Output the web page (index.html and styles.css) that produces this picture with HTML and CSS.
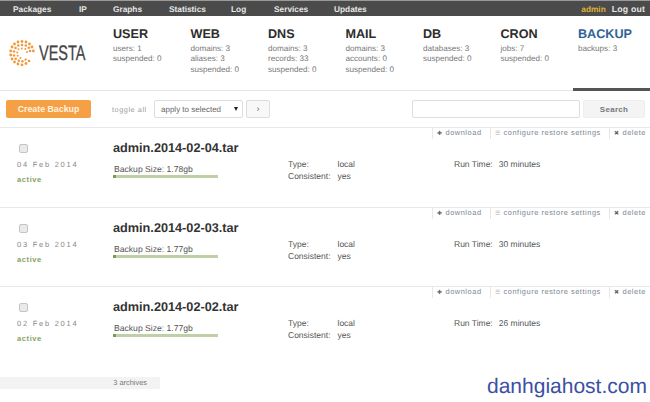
FILE: index.html
```html
<!DOCTYPE html>
<html lang="en">
<head>
<meta charset="utf-8">
<title>Vesta - Backup</title>
<link rel="stylesheet" href="styles.css">
</head>
<body>
<nav class="topbar">
  <div class="menu">
    <a>Packages</a><a>IP</a><a>Graphs</a><a>Statistics</a><a>Log</a><a>Services</a><a>Updates</a>
  </div>
  <div class="session"><span class="user">admin</span><a>Log out</a></div>
</nav>
<header class="stats">
  <div class="logo">
    <svg class="logo-mark" width="26" height="26" viewBox="0 0 26 26">
      <g fill="#f09a3e">
        <circle cx="13" cy="1.5" r="1.4"/><circle cx="9" cy="2" r="1.4"/><circle cx="17" cy="2" r="1.4"/><circle cx="5.5" cy="4" r="1.4"/><circle cx="20.5" cy="4" r="1.4"/><circle cx="3" cy="7" r="1.4"/><circle cx="23" cy="7" r="1.4"/><circle cx="1.7" cy="11" r="1.4"/><circle cx="24.3" cy="11" r="1.4"/><circle cx="1.7" cy="15" r="1.4"/><circle cx="3" cy="19" r="1.4"/><circle cx="5.5" cy="22" r="1.4"/><circle cx="9" cy="24" r="1.4"/><circle cx="13" cy="24.8" r="1.4"/><circle cx="17" cy="23.5" r="1.4"/><circle cx="20" cy="21" r="1.3"/>
        <circle cx="13" cy="5" r="1.3"/><circle cx="9.3" cy="5.5" r="1.3"/><circle cx="16.8" cy="5.5" r="1.3"/><circle cx="6.5" cy="8" r="1.3"/><circle cx="19.8" cy="7.7" r="1.3"/><circle cx="5" cy="11.5" r="1.3"/><circle cx="21" cy="11" r="1.3"/><circle cx="5" cy="15.5" r="1.3"/><circle cx="6.7" cy="18.8" r="1.3"/><circle cx="9.8" cy="20.8" r="1.3"/><circle cx="13.4" cy="21.2" r="1.3"/><circle cx="16.6" cy="19.6" r="1.2"/>
        <circle cx="12.8" cy="8.4" r="1"/><circle cx="9.5" cy="9.2" r="1"/><circle cx="16.3" cy="9" r="1"/><circle cx="8.2" cy="12.5" r="1"/><circle cx="18" cy="12" r="1"/><circle cx="8.6" cy="15.8" r="1"/><circle cx="11.5" cy="18" r="1"/>
      </g>
    </svg>
    <span class="logo-text">VESTA</span>
  </div>
  <div class="stat"><h2>USER</h2><p>users: 1</p><p>suspended: 0</p></div>
  <div class="stat"><h2>WEB</h2><p>domains: 3</p><p>aliases: 3</p><p>suspended: 0</p></div>
  <div class="stat"><h2>DNS</h2><p>domains: 3</p><p>records: 33</p><p>suspended: 0</p></div>
  <div class="stat"><h2>MAIL</h2><p>domains: 3</p><p>accounts: 0</p><p>suspended: 0</p></div>
  <div class="stat"><h2>DB</h2><p>databases: 3</p><p>suspended: 0</p></div>
  <div class="stat"><h2>CRON</h2><p>jobs: 7</p><p>suspended: 0</p></div>
  <div class="stat active"><h2>BACKUP</h2><p>backups: 3</p></div>
</header>
<section class="toolbar">
  <button class="create" type="button">Create Backup</button>
  <span class="toggle">toggle all</span>
  <div class="select"><span>apply to selected</span><i class="caret"></i></div>
  <button class="go" type="button">›</button>
  <div class="searchbox"></div>
  <button class="search" type="button">Search</button>
</section>
<main>
  <article class="row">
    <div class="actions"><a class="a-dl"><b class="ic">✚</b>download</a><a class="a-cfg"><b class="ic lines">☰</b>configure restore settings</a><a class="a-del"><b class="ic">✖</b>delete</a></div>
    <div class="body">
      <div class="left"><span class="check"></span><div class="date">04 Feb 2014</div><div class="status">active</div></div>
      <div class="main-col"><h3>admin.2014-02-04.tar</h3><div class="size">Backup Size: 1.78gb</div><div class="bar"><span></span></div></div>
      <dl class="meta"><div><dt>Type:</dt><dd>local</dd></div><div class="second"><dt>Consistent:</dt><dd>yes</dd></div></dl>
      <div class="run"><span>Run Time:</span><span>30 minutes</span></div>
    </div>
  </article>
  <article class="row">
    <div class="actions"><a class="a-dl"><b class="ic">✚</b>download</a><a class="a-cfg"><b class="ic lines">☰</b>configure restore settings</a><a class="a-del"><b class="ic">✖</b>delete</a></div>
    <div class="body">
      <div class="left"><span class="check"></span><div class="date">03 Feb 2014</div><div class="status">active</div></div>
      <div class="main-col"><h3>admin.2014-02-03.tar</h3><div class="size">Backup Size: 1.77gb</div><div class="bar"><span></span></div></div>
      <dl class="meta"><div><dt>Type:</dt><dd>local</dd></div><div class="second"><dt>Consistent:</dt><dd>yes</dd></div></dl>
      <div class="run"><span>Run Time:</span><span>30 minutes</span></div>
    </div>
  </article>
  <article class="row">
    <div class="actions"><a class="a-dl"><b class="ic">✚</b>download</a><a class="a-cfg"><b class="ic lines">☰</b>configure restore settings</a><a class="a-del"><b class="ic">✖</b>delete</a></div>
    <div class="body">
      <div class="left"><span class="check"></span><div class="date">02 Feb 2014</div><div class="status">active</div></div>
      <div class="main-col"><h3>admin.2014-02-02.tar</h3><div class="size">Backup Size: 1.77gb</div><div class="bar"><span></span></div></div>
      <dl class="meta"><div><dt>Type:</dt><dd>local</dd></div><div class="second"><dt>Consistent:</dt><dd>yes</dd></div></dl>
      <div class="run"><span>Run Time:</span><span>26 minutes</span></div>
    </div>
  </article>
</main>
<footer class="count">3 archives</footer>
<div class="watermark">danhgiahost.com</div>
</body>
</html>
```
FILE: styles.css
```css
* { box-sizing: border-box; }
html, body { margin: 0; padding: 0; }
body {
  position: relative;
  width: 650px;
  height: 402px;
  overflow: hidden;
  background: #fff;
  color: #555;
  font-family: "Liberation Sans", Arial, sans-serif;
  font-size: 9px;
  text-rendering: geometricPrecision;
}
.topbar {
  height: 16px;
  background: #4b4b4b;
  border-top: 1px solid #9a9a9a;
  color: #e6e6e6;
  font-weight: bold;
  display: flex;
  justify-content: space-between;
  align-items: center;
  padding: 0 5px 0 13px;
  font-size: 8.3px;
}
.menu {
  display: grid;
  grid-template-columns: 66px 34px 56px 62px 43px 60px auto;
}
.session { display: flex; gap: 6px; }
.session a { font-size: 8.7px; letter-spacing: .2px; }
.user { color: #dfb232; }
.stats {
  height: 75px;
  display: flex;
  border-bottom: 1px solid #e6e6e6;
}
.logo {
  width: 113px;
  display: flex;
  align-items: flex-start;
  padding: 24px 0 0 8.5px;
}
.logo-mark { flex: none; }
.logo-text {
  margin: 2px 0 0 4px;
  color: #444;
  font-size: 21px;
  line-height: 23px;
  -webkit-text-stroke: .3px #444;
  transform: scaleX(.69);
  transform-origin: left center;
}
.stat { width: 77.5px; padding-top: 11px; position: relative; }
.stat h2 {
  margin: 0 0 2px;
  color: #2d2d2d;
  font-size: 12.6px;
  line-height: 15px;
  font-weight: bold;
}
.stat p {
  margin: 0;
  color: #777;
  font-size: 8.1px;
  line-height: 10.3px;
}
.stat.active { flex: 1; }
.stat.active h2 { color: #2f6496; }
.stat.active::after {
  content: "";
  position: absolute;
  left: -5px;
  right: 0;
  bottom: -1px;
  height: 3px;
  background: #555;
}
.toolbar {
  height: 36px;
  display: flex;
  align-items: flex-start;
  padding: 9px 5px 0 6px;
}
.toolbar button {
  font-family: inherit;
  padding: 0;
  height: 18px;
  border-radius: 2px;
}
.create {
  width: 85px;
  border: 0;
  background: #f5a045;
  color: #fff3e0;
  font-size: 8.8px;
  font-weight: bold;
}
.toggle {
  margin: 5px 0 0 21px;
  width: 42px;
  color: #999;
  font-size: 7.2px;
  letter-spacing: .6px;
}
.select {
  width: 89px;
  height: 18px;
  border: 1px solid #ddd;
  border-radius: 2px;
  display: flex;
  align-items: center;
  justify-content: space-between;
  padding: 0 4px 0 6px;
  color: #666;
  font-size: 8px;
}
.caret {
  width: 0;
  height: 0;
  border-left: 2.5px solid transparent;
  border-right: 2.5px solid transparent;
  border-top: 4px solid #222;
}
.go {
  width: 24px;
  margin-left: 3px;
  background: #f8f8f8;
  border: 1px solid #ddd;
  color: #666;
  font-size: 9px;
}
.searchbox {
  width: 168px;
  height: 18px;
  margin-left: 142px;
  border: 1px solid #ddd;
  border-radius: 2px;
}
.search {
  width: 62px;
  margin-left: 3px;
  border: 1px solid #eee;
  background: #f4f4f4;
  color: #777;
  font-size: 8px;
  font-weight: bold;
  letter-spacing: .3px;
}
.row {
  height: 79.5px;
  border-top: 1px solid #e8e8e8;
}
.actions {
  display: flex;
  height: 11px;
  margin-left: 432px;
  color: #7b8794;
  font-size: 7.4px;
  letter-spacing: .55px;
  line-height: 10px;
}
.actions a {
  display: block;
  border-left: 1px solid #e8e8e8;
  padding-left: 4px;
  white-space: nowrap;
}
.a-dl { width: 58px; }
.a-cfg { width: 119px; }
.ic {
  display: inline-block;
  width: 8.5px;
  font-size: 6px;
  font-weight: normal;
  color: #666;
  letter-spacing: 0;
}
.ic.lines { color: #aaa; }
.body { display: flex; align-items: flex-start; }
.left { width: 113px; padding: 5px 0 0 17px; }
.check {
  display: block;
  width: 9px;
  height: 9px;
  margin-left: 2px;
  border: 1px solid #c4c4c4;
  border-radius: 2px;
  background: #eaeaea;
}
.date {
  margin-top: 7px;
  color: #888;
  font-size: 7.5px;
  line-height: 9px;
  letter-spacing: 1.75px;
}
.status {
  margin-top: 6px;
  color: #86a366;
  font-size: 7.5px;
  font-weight: bold;
  line-height: 9px;
  letter-spacing: .6px;
}
.main-col { width: 175px; padding-top: 1px; }
.main-col h3 {
  margin: 0;
  color: #333;
  font-size: 12.7px;
  line-height: 17px;
  font-weight: bold;
}
.size {
  margin: 7px 0 0 1px;
  color: #555;
  font-size: 8.6px;
  line-height: 11px;
}
.bar {
  width: 105px;
  height: 3px;
  background: #bfd0a6;
}
.bar span {
  display: block;
  width: 3px;
  height: 3px;
  background: #7d9a5c;
}
.meta {
  width: 166px;
  margin: 20px 0 0;
  font-size: 8.5px;
  line-height: 11px;
}
.meta div { display: flex; }
.meta .second { margin-top: 1px; }
.meta dt { width: 49.5px; }
.meta dd { margin: 0; }
.run {
  margin-top: 20px;
  display: flex;
  gap: 6px;
  font-size: 8.5px;
  line-height: 11px;
}
.count {
  position: absolute;
  left: 0;
  top: 377px;
  width: 160px;
  height: 12px;
  padding-right: 13px;
  background: #f3f3f3;
  color: #777;
  font-size: 7.4px;
  line-height: 12px;
  text-align: right;
}
.watermark {
  position: absolute;
  left: 487px;
  top: 375px;
  color: #3a50a4;
  font-size: 21px;
  line-height: 24px;
}
```
